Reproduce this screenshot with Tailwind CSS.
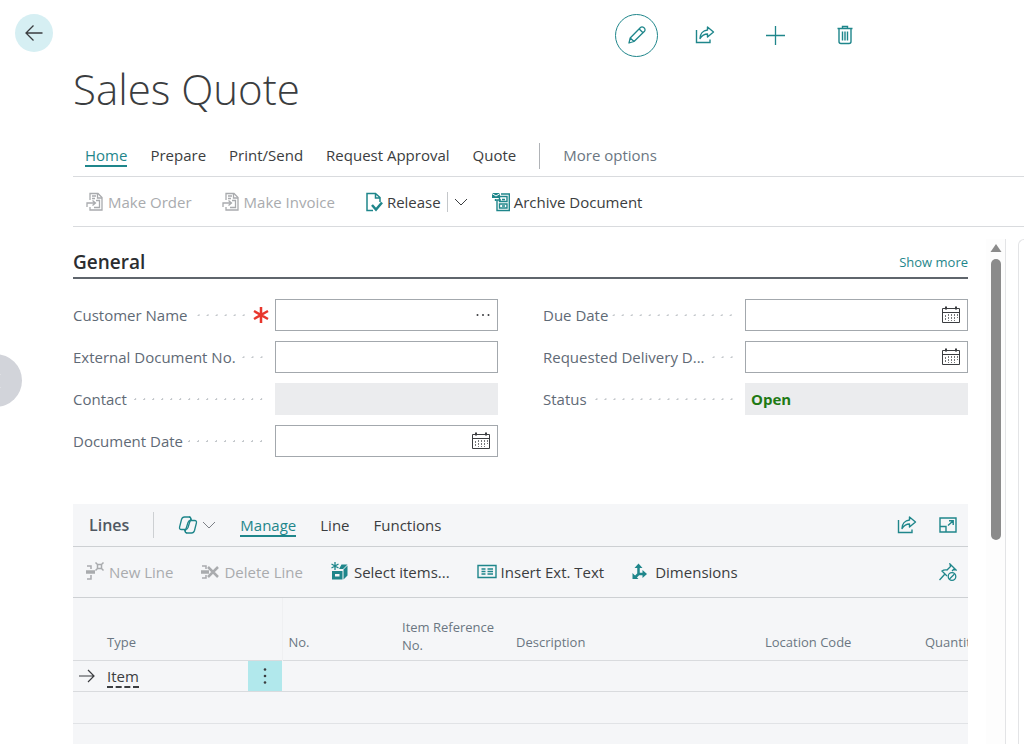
<!DOCTYPE html>
<html lang="en">
<head>
    <meta charset="UTF-8">
    <meta name="viewport" content="width=device-width, initial-scale=1.0">
    <title>Sales Quote</title>

    <!-- Tailwind CSS -->
    <script src="https://cdn.jsdelivr.net/npm/@tailwindcss/browser@4"></script>
</head>
<body class="bg-white font-['Open_Sans','Noto_Sans',sans-serif] text-[15px] leading-5 text-[#3b3d40]">

    <!-- Shared icons -->
    <svg class="hidden" aria-hidden="true">
        <symbol id="icon-share" viewBox="0 0 20 20" fill="none" stroke="currentColor" stroke-width="1.4">
            <path d="M1.500 5v12.500h13.500v-3"/>
            <path d="M12.500 2l6 5-6 5V9C9 9 7 10.500 5 13.500 5 9 8 5.500 12.500 5z" stroke-linejoin="round"/>
        </symbol>
        <symbol id="icon-calendar" viewBox="0 0 20 20" fill="none" stroke="currentColor">
            <path d="M1.500 3.500h17v14h-17zM1.500 7.500h17" stroke-width="1"/>
            <path d="M5 1.500v3M15 1.500v3" stroke-width="2"/>
            <path d="M4.500 10v6M7.500 9v7M10.500 9v7M13.500 9v7M16.500 9v4" stroke-width="1" stroke-dasharray="2 1" stroke-opacity=".7"/>
        </symbol>
        <symbol id="icon-make" viewBox="0 0 18 20" fill="none" stroke="currentColor" stroke-width="1.300">
            <path d="M4 8V1.500h8l4 4v12.500H4v-3"/>
            <path d="M11.500 1.500v4.500H16M6 4h4M6 6.500h3"/>
            <path d="M1 15v-4h8M6.500 8.500L9.500 11l-3 2.500M10 8.500h3.500v7H8" />
        </symbol>
        <symbol id="icon-chevron" viewBox="0 0 14 8" fill="none" stroke="currentColor">
            <path d="M1 1l6 6 6-6"/>
        </symbol>
    </svg>

    <div class="relative flex h-screen flex-col overflow-hidden">

        <!-- Previous record handle -->
        <button aria-label="Previous" class="absolute top-[354px] -left-[31px] flex size-[53px] items-center justify-end rounded-full bg-[#d2d4da]">
            <svg class="mr-5 h-4 w-3 text-white" viewBox="0 0 12 16" fill="none" stroke="currentColor" stroke-width="1.5"><path d="M10 1L3 8l7 7"/></svg>
        </button>

        <!-- Top bar -->
        <header class="flex h-[66px] shrink-0 items-center justify-between pl-[15px] pr-[169px] text-[#1f868b]">
            <button aria-label="Back" class="flex size-[38px] items-center justify-center rounded-full bg-[#d6eff3] text-[#3b3d40]">
                <svg class="h-4 w-[18px]" viewBox="0 0 18 16" fill="none" stroke="currentColor" stroke-width="1.300"><path d="M17.500 8H1M8.500 .5L1 8l7.500 7.500"/></svg>
            </button>
            <div class="flex items-center pt-1">
                <button aria-label="Edit" class="flex size-[43px] items-center justify-center rounded-full border border-[#1f868b]">
                    <svg class="size-5" viewBox="0 0 20 20" fill="none" stroke="currentColor" stroke-width="1.300" stroke-linejoin="round"><path d="M2 18l1.200-5L13.500 2.500c2-2 6 1.500 4 3.700L7 16.500zM3.200 13L7 16.500M12.200 4l3.800 3.700"/></svg>
                </button>
                <button aria-label="Share" class="ml-[37px]"><svg class="size-5"><use href="#icon-share"/></svg></button>
                <button aria-label="New" class="ml-[51px]">
                    <svg class="size-[19px]" viewBox="0 0 19 19" stroke="currentColor" stroke-width="1.300"><path d="M9.500 0v19M0 9.500h19"/></svg>
                </button>
                <button aria-label="Delete" class="ml-[50px]">
                    <svg class="size-5" viewBox="0 0 20 20" fill="none" stroke="currentColor" stroke-width="1.400"><path d="M2.500 3.500h15M7.500 3.500v-2h5v2M4 3.500v13q0 2 2 2h8q2 0 2-2v-13M7.500 6.500v9M10 6.500v9M12.500 6.500v9"/></svg>
                </button>
            </div>
        </header>

        <h1 class="ml-[73px] h-[68px] shrink-0 text-[42px] leading-[46px] font-light">Sales Quote</h1>

        <!-- Page tabs -->
        <nav class="ml-[73px] flex h-[43px] shrink-0 items-center gap-[23px] border-b border-[#d9dbde] pt-[2px] pl-3">
            <button class="border-b-2 border-[#1f868b] text-[#1f868b]">Home</button>
            <button class="border-b-2 border-transparent">Prepare</button>
            <button class="border-b-2 border-transparent">Print/Send</button>
            <button class="border-b-2 border-transparent">Request Approval</button>
            <button class="border-b-2 border-transparent">Quote</button>
            <span class="h-[26px] w-px bg-[#b0b3b7]"></span>
            <button class="border-b-2 border-transparent text-[#6b7682]">More options</button>
        </nav>

        <!-- Page actions -->
        <div class="ml-[73px] flex h-[50px] shrink-0 items-center border-b border-[#d9dbde] pl-[13px]">
            <button disabled class="mr-[30px] flex items-center gap-1 text-[#a9abae]"><svg class="h-5 w-[18px]"><use href="#icon-make"/></svg>Make Order</button>
            <button disabled class="mr-[30px] flex items-center gap-1 text-[#a9abae]"><svg class="h-5 w-[18px]"><use href="#icon-make"/></svg>Make Invoice</button>
            <button class="flex items-center gap-1">
                <svg class="h-5 w-[18px] text-[#1f868b]" viewBox="0 0 18 20" fill="none" stroke="currentColor" stroke-width="1.500"><path d="M15 10V5.500L10.500 1.500H2v17h6M10.500 1.500V6H15"/><path d="M7 13l4 4.500 6-7" stroke-width="2.500"/></svg>
                Release
            </button>
            <span class="ml-[6px] h-5 w-px bg-[#c4c7ca]"></span>
            <button aria-label="More release options" class="ml-[6px]"><svg class="h-2 w-[14px]"><use href="#icon-chevron"/></svg></button>
            <button class="ml-6 flex items-center gap-1">
                <svg class="h-5 w-[18px] text-[#1f868b]" viewBox="0 0 18 20" fill="none" stroke="currentColor" stroke-width="1.400"><path d="M0 1h8v5H0z" fill="currentColor" stroke="none"/><path d="M0 1.500l4 2.500 4-2.500" stroke="#fff" stroke-width="1"/><path d="M3.500 7v2M9 2h8.300v16.500H5V8h4"/><path d="M7.500 4.500h7.500v5H7.500zM7.500 12h7.500v4H7.500zM10 7.500h3M10 14h3"/></svg>
                Archive Document
            </button>
        </div>

        <div class="flex min-h-0 flex-1">

            <main class="ml-[73px] flex min-w-0 flex-1 flex-col">

                <!-- General -->
                <div class="mt-5 flex h-8 shrink-0 items-center justify-between border-b-2 border-[#5f656c]">
                    <h2 class="text-[19px] font-semibold text-[#2b2d30]">General</h2>
                    <a href="#" class="text-[13px] text-[#1f868b]">Show more</a>
                </div>

                <div class="mt-5 grid shrink-0 grid-cols-2 gap-x-[45px]">
                    <div class="flex flex-col gap-[10px]">
                        <div class="flex h-8 items-center">
                            <label for="customer" class="text-[#5f6a76]">Customer Name</label>
                            <span class="ml-2 h-[9px] flex-1 bg-[radial-gradient(circle,#c3c7cb_1px,transparent_1px)] bg-size-[9px_9px] bg-right"></span>
                            <svg class="mr-[6px] ml-1 size-4 text-[#e8362c]" viewBox="0 0 16 16" stroke="currentColor" stroke-width="2.500"><path d="M8 0v16M1 4l14 8M15 4L1 12"/></svg>
                            <div class="relative h-8 w-[223px]">
                                <input id="customer" type="text" required class="size-full border border-[#a3a8ad] px-2">
                                <button aria-label="Look up customer" class="absolute inset-y-0 right-2 flex items-center">
                                    <svg class="h-1 w-[14px]" viewBox="0 0 14 4" fill="currentColor"><circle cx="1.500" cy="2" r="1"/><circle cx="7" cy="2" r="1"/><circle cx="12.500" cy="2" r="1"/></svg>
                                </button>
                            </div>
                        </div>
                        <div class="flex h-8 items-center">
                            <label for="external" class="text-[#5f6a76]">External Document No.</label>
                            <span class="mr-[9px] ml-[3px] h-[9px] flex-1 bg-[radial-gradient(circle,#c3c7cb_1px,transparent_1px)] bg-size-[9px_9px] bg-right"></span>
                            <input id="external" type="text" class="h-8 w-[223px] border border-[#a3a8ad] px-2">
                        </div>
                        <div class="flex h-8 items-center">
                            <label for="contact" class="text-[#5f6a76]">Contact</label>
                            <span class="mr-[9px] ml-[3px] h-[9px] flex-1 bg-[radial-gradient(circle,#c3c7cb_1px,transparent_1px)] bg-size-[9px_9px] bg-right"></span>
                            <input id="contact" type="text" readonly class="h-8 w-[223px] bg-[#ebecee] px-2">
                        </div>
                        <div class="flex h-8 items-center">
                            <label for="docdate" class="text-[#5f6a76]">Document Date</label>
                            <span class="mr-[9px] ml-[3px] h-[9px] flex-1 bg-[radial-gradient(circle,#c3c7cb_1px,transparent_1px)] bg-size-[9px_9px] bg-right"></span>
                            <div class="relative h-8 w-[223px]">
                                <input id="docdate" type="text" class="size-full border border-[#a3a8ad] px-2">
                                <button aria-label="Pick document date" class="absolute inset-y-0 right-[7px] flex items-center"><svg class="size-5"><use href="#icon-calendar"/></svg></button>
                            </div>
                        </div>
                    </div>

                    <div class="flex flex-col gap-[10px]">
                        <div class="flex h-8 items-center">
                            <label for="duedate" class="text-[#5f6a76]">Due Date</label>
                            <span class="mr-[9px] ml-[3px] h-[9px] flex-1 bg-[radial-gradient(circle,#c3c7cb_1px,transparent_1px)] bg-size-[9px_9px] bg-right"></span>
                            <div class="relative h-8 w-[223px]">
                                <input id="duedate" type="text" class="size-full border border-[#a3a8ad] px-2">
                                <button aria-label="Pick due date" class="absolute inset-y-0 right-[7px] flex items-center"><svg class="size-5"><use href="#icon-calendar"/></svg></button>
                            </div>
                        </div>
                        <div class="flex h-8 items-center">
                            <label for="delivery" class="text-[#5f6a76]">Requested Delivery D...</label>
                            <span class="mr-[9px] ml-[3px] h-[9px] flex-1 bg-[radial-gradient(circle,#c3c7cb_1px,transparent_1px)] bg-size-[9px_9px] bg-right"></span>
                            <div class="relative h-8 w-[223px]">
                                <input id="delivery" type="text" class="size-full border border-[#a3a8ad] px-2">
                                <button aria-label="Pick delivery date" class="absolute inset-y-0 right-[7px] flex items-center"><svg class="size-5"><use href="#icon-calendar"/></svg></button>
                            </div>
                        </div>
                        <div class="flex h-8 items-center">
                            <label for="status" class="text-[#5f6a76]">Status</label>
                            <span class="mr-[9px] ml-[3px] h-[9px] flex-1 bg-[radial-gradient(circle,#c3c7cb_1px,transparent_1px)] bg-size-[9px_9px] bg-right"></span>
                            <input id="status" type="text" readonly value="Open" class="h-8 w-[223px] bg-[#ebecee] px-[6px] font-bold text-[#1f7a14]">
                        </div>
                    </div>
                </div>

                <!-- Lines -->
                <section class="mt-[47px] min-h-0 flex-1 overflow-hidden bg-[#f5f6f8]">
                    <div class="flex h-[43px] items-center border-b border-[#cdd0d3] pr-[11px] pl-4">
                        <h2 class="text-base font-semibold text-[#505862]">Lines</h2>
                        <span class="ml-6 h-[26px] w-px bg-[#cdd0d3]"></span>
                        <button aria-label="Copilot" class="ml-6 flex items-center gap-1">
                            <svg class="size-5 text-[#1f868b]" viewBox="0 0 20 20" fill="none" stroke="currentColor" stroke-width="1.300" stroke-linejoin="round"><path d="M6.500 2H11q2.200 0 1.600 2.200L10 12.500Q9.300 14.500 7.200 14.500H3.500Q1 14.500 1.600 12L3.500 4.500Q4.200 2 6.500 2z"/><path d="M13 5.500h3.500q2.500 0 1.900 2.500l-1.900 7.500Q15.800 18 13.500 18H9q-2.200 0-1.600-2.200L10 7.500q.7-2 3-2z"/><path d="M11 2q1.500 0 2 1.800l.5 1.700M9 18q-1.500 0-2-1.800l-.5-1.700"/></svg>
                            <svg class="h-2 w-[14px] text-[#7c8086]"><use href="#icon-chevron"/></svg>
                        </button>
                        <nav class="ml-6 flex gap-6 pt-[2px]">
                            <button class="border-b-2 border-[#1f868b] text-[#1f868b]">Manage</button>
                            <button class="border-b-2 border-transparent">Line</button>
                            <button class="border-b-2 border-transparent">Functions</button>
                        </nav>
                        <button aria-label="Share lines" class="ml-auto text-[#1f868b]"><svg class="size-5"><use href="#icon-share"/></svg></button>
                        <button aria-label="Expand lines" class="ml-[22px] text-[#1f868b]">
                            <svg class="size-[18px]" viewBox="0 0 18 18" fill="none" stroke="currentColor" stroke-width="1.400"><path d="M1 2h16v14H1zM1 10.500h6V16M9 9.500l5-4.500M10 4.800h4.200V9"/></svg>
                        </button>
                    </div>

                    <div class="flex h-[51px] items-center border-b border-[#cdd0d3] pr-[11px] pl-3">
                        <button disabled class="mr-[27px] flex items-center gap-1 text-[#a9abae]">
                            <svg class="size-5" viewBox="0 0 20 20" fill="none" stroke="currentColor" stroke-width="1.500"><path d="M2 4h4v3M2 17h4v-4"/><path d="M1 10h9" stroke-width="3.500"/><path d="M12.500 2.500h4v4h-4zM10.500 .5l2 2M18.500 .5l-2 2M10.500 8.500l2-2M18.500 8.500l-2-2"/></svg>
                            New Line
                        </button>
                        <button disabled class="mr-[27px] flex items-center gap-1 text-[#a9abae]">
                            <svg class="size-5" viewBox="0 0 20 20" fill="none" stroke="currentColor" stroke-width="1.500"><path d="M2 4h4v3M2 16h4v-3"/><path d="M1 10h8" stroke-width="3.500"/><path d="M8 5l10 10M18 5L8 15" stroke-width="2.500"/></svg>
                            Delete Line
                        </button>
                        <button class="mr-[27px] flex items-center gap-1">
                            <svg class="size-5 text-[#1f868b]" viewBox="0 0 20 20" fill="currentColor"><path d="M2 9h10.500v8.500H2zM13.500 7.500l4-4v10l-4 4zM9 7l2.500-4.500h6L13 7z"/><path d="M5 12h4.500v2.500H5z" fill="#f5f6f8"/><path d="M5 0v8M1.500 2l7 4M8.500 2l-7 4" stroke="currentColor" stroke-width="1.300"/></svg>
                            Select items...
                        </button>
                        <button class="mr-[27px] flex items-center gap-1">
                            <svg class="size-5 text-[#1f868b]" viewBox="0 0 20 20" fill="none" stroke="currentColor" stroke-width="1.400"><path d="M1 3.500h18v12H1z"/><path d="M4.500 7h4M10.500 7H16M4.500 9.500h4M10.500 9.500H16M4.500 12h4M10.500 12H16"/></svg>
                            Insert Ext. Text
                        </button>
                        <button class="flex items-center gap-1">
                            <svg class="size-5 text-[#1f868b]" viewBox="0 0 20 20" fill="currentColor"><path d="M7.500 1.500l4 4.500h-8zM16 12l-4.500 4V8zM1.500 17v-6L7.500 17z"/><path d="M7.500 5v7H13M7.500 12L4 15.500" fill="none" stroke="currentColor" stroke-width="2.500"/></svg>
                            Dimensions
                        </button>
                        <button aria-label="Unpin" class="ml-auto text-[#1f868b]">
                            <svg class="size-[18px]" viewBox="0 0 18 18" fill="none" stroke="currentColor" stroke-width="1.300"><path d="M8 13L3 8c2-1.500 4-1 5-1l3.500-3.500L11 1l6 6-2.500-.5-1.500 1.500M5.500 11.500L.5 17"/><circle cx="13" cy="13.500" r="3.800"/><path d="M10.500 16l5-5"/></svg>
                        </button>
                    </div>

                    <table class="w-full table-fixed border-collapse text-left">
                        <colgroup>
                            <col class="w-[34px]">
                            <col class="w-[141px]">
                            <col class="w-[34px]">
                            <col class="w-[114px]">
                            <col class="w-[114px]">
                            <col>
                            <col class="w-[160px]">
                            <col class="w-[49px]">
                        </colgroup>
                        <thead class="text-[13px] leading-[18px] text-[#6b7682]">
                            <tr class="h-[62px] border-b border-[#d9dbde] align-bottom">
                                <th></th>
                                <th class="pb-[9px] font-normal">Type</th>
                                <th class="border-r border-[#eff0f2]"></th>
                                <th class="pb-[9px] pl-[6px] font-normal">No.</th>
                                <th class="pb-[6px] pl-[6px] font-normal">Item Reference No.</th>
                                <th class="pb-[9px] pl-[6px] font-normal">Description</th>
                                <th class="pb-[9px] pl-[6px] font-normal">Location Code</th>
                                <th class="overflow-hidden pb-[9px] pl-[6px] font-normal whitespace-nowrap">Quantity</th>
                            </tr>
                        </thead>
                        <tbody>
                            <tr class="h-[31px] border-b border-[#d9dbde]">
                                <td class="pl-[6px]"><svg class="h-[14px] w-4" viewBox="0 0 16 14" fill="none" stroke="currentColor" stroke-width="1.200"><path d="M0 7h15M9 1l6 6-6 6"/></svg></td>
                                <td><a href="#" class="border-b-2 border-dashed border-[#3b3d40]">Item</a></td>
                                <td class="bg-[#b1e8ec] p-0">
                                    <button aria-label="Row menu" class="flex h-[30px] w-full items-center justify-center">
                                        <svg class="h-4 w-1" viewBox="0 0 4 16" fill="currentColor"><circle cx="2" cy="1.500" r="1.300"/><circle cx="2" cy="8" r="1.300"/><circle cx="2" cy="14.500" r="1.300"/></svg>
                                    </button>
                                </td>
                                <td></td><td></td><td></td><td></td><td></td>
                            </tr>
                            <tr class="h-8 border-b border-[#e1e3e6]">
                                <td></td><td></td><td></td><td></td><td></td><td></td><td></td><td></td>
                            </tr>
                        </tbody>
                    </table>
                </section>
            </main>

            <!-- Scrollbar -->
            <div class="mt-3 ml-[18px] flex w-5 shrink-0 flex-col items-center border-r border-[#e3e4e6] bg-[#fdfdfd]">
                <svg class="mt-[5px] h-2 w-3 text-[#8b8b8b]" viewBox="0 0 12 8" fill="currentColor"><path d="M6 0l5.500 8H.5z"/></svg>
                <div class="mt-[7px] h-[281px] w-[10px] rounded-full bg-[#8b8b8b]"></div>
            </div>

            <!-- FactBox pane edge -->
            <aside class="mt-3 ml-3 w-[6px] shrink-0 rounded-tl-md border-t border-l border-[#e3e4e6]"></aside>
        </div>
    </div>

</body>
</html>
